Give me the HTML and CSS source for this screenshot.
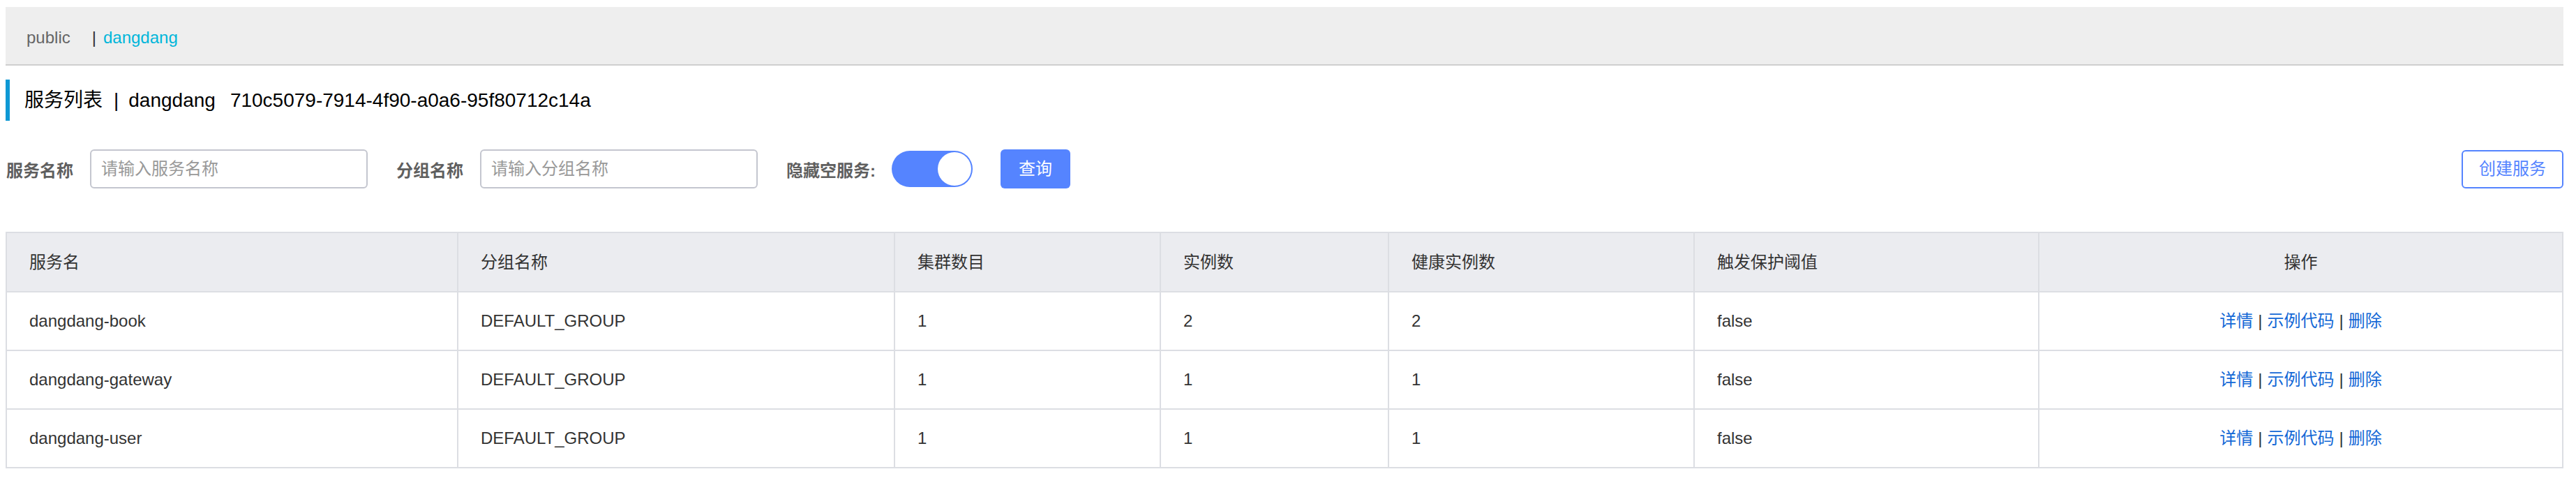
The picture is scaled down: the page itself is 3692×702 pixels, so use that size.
FILE: index.html
```html
<!DOCTYPE html>
<html lang="zh-CN">
<head>
<meta charset="utf-8">
<title>服务列表</title>
<link rel="stylesheet" href="styles.css">
</head>
<body>
<div class="page">
  <div class="ns-bar">
    <span class="ns-item">public</span>
    <span class="ns-sep">|</span>
    <span class="ns-item ns-active">dangdang</span>
  </div>

  <h1 class="page-title">服务列表<span class="title-sep">|</span>dangdang<span class="title-id">710c5079-7914-4f90-a0a6-95f80712c14a</span></h1>

  <div class="filter-row">
    <div class="filter-left">
      <div class="form-item">
        <label class="form-label">服务名称</label>
        <input class="text-input" type="text" placeholder="请输入服务名称">
      </div>
      <div class="form-item">
        <label class="form-label">分组名称</label>
        <input class="text-input" type="text" placeholder="请输入分组名称">
      </div>
      <div class="form-item">
        <label class="form-label">隐藏空服务:</label>
        <span class="switch"><span class="switch-knob"></span></span>
      </div>
      <button class="btn btn-primary" type="button">查询</button>
    </div>
    <button class="btn btn-outline" type="button">创建服务</button>
  </div>

  <table class="data-table">
    <colgroup>
      <col class="c1"><col class="c2"><col class="c3"><col class="c4"><col class="c5"><col class="c6"><col class="c7">
    </colgroup>
    <thead>
      <tr>
        <th>服务名</th>
        <th>分组名称</th>
        <th>集群数目</th>
        <th>实例数</th>
        <th>健康实例数</th>
        <th>触发保护阈值</th>
        <th class="center">操作</th>
      </tr>
    </thead>
    <tbody>
      <tr>
        <td>dangdang-book</td>
        <td>DEFAULT_GROUP</td>
        <td>1</td>
        <td>2</td>
        <td>2</td>
        <td>false</td>
        <td class="center"><a class="op-link">详情</a><span class="op-sep">|</span><a class="op-link">示例代码</a><span class="op-sep">|</span><a class="op-link">删除</a></td>
      </tr>
      <tr>
        <td>dangdang-gateway</td>
        <td>DEFAULT_GROUP</td>
        <td>1</td>
        <td>1</td>
        <td>1</td>
        <td>false</td>
        <td class="center"><a class="op-link">详情</a><span class="op-sep">|</span><a class="op-link">示例代码</a><span class="op-sep">|</span><a class="op-link">删除</a></td>
      </tr>
      <tr>
        <td>dangdang-user</td>
        <td>DEFAULT_GROUP</td>
        <td>1</td>
        <td>1</td>
        <td>1</td>
        <td>false</td>
        <td class="center"><a class="op-link">详情</a><span class="op-sep">|</span><a class="op-link">示例代码</a><span class="op-sep">|</span><a class="op-link">删除</a></td>
      </tr>
    </tbody>
  </table>
</div>
</body>
</html>
```

FILE: styles.css
```css
* { box-sizing: border-box; }

html, body {
  margin: 0;
  padding: 0;
  background: #ffffff;
}

body {
  font-family: "Liberation Sans", Arial, "Noto Sans CJK SC", sans-serif;
  font-size: 24px;
  color: #333333;
}

.page {
  padding: 10px 18px 0 8px;
}

/* namespace bar */
.ns-bar {
  height: 84px;
  background: #eeeeee;
  border-bottom: 2px solid #cfcfcf;
  padding: 5px 0 0 30px;
  line-height: 77px;
  font-size: 24px;
  display: flex;
}

.ns-item {
  color: #666666;
}

.ns-sep {
  color: #333333;
  margin: 0 10px 0 31px;
}

.ns-active {
  color: #00b6da;
}

/* page title */
.page-title {
  margin: 20px 0 0 0;
  height: 59px;
  border-left: 6px solid #0e98d4;
  padding-left: 21px;
  display: flex;
  align-items: center;
  font-size: 28px;
  font-weight: normal;
  color: #000000;
  line-height: 59px;
}

.title-sep {
  margin: 0 14px 0 16px;
}

.title-id {
  margin-left: 21px;
}

/* filter row */
.filter-row {
  margin-top: 41px;
  display: flex;
  justify-content: space-between;
  align-items: center;
}

.filter-left {
  display: flex;
  align-items: center;
}

.form-item {
  display: flex;
  align-items: center;
  margin-right: 40px;
}

.form-label {
  font-weight: bold;
  color: #5f5f5f;
  font-size: 24px;
  margin-left: 1px;
  margin-right: 24px;
}

.text-input {
  width: 398px;
  height: 56px;
  border: 2px solid #c4c6cf;
  border-radius: 6px;
  padding: 0 14px;
  font-family: "Liberation Sans", Arial, "Noto Sans CJK SC", sans-serif;
  font-size: 24px;
  color: #333333;
  outline: none;
  background: #ffffff;
}

.text-input::placeholder {
  color: #999999;
}

.switch {
  position: relative;
  display: inline-block;
  width: 116px;
  height: 52px;
  border-radius: 26px;
  background: #5584ff;
  margin-left: -1px;
}

.switch-knob {
  position: absolute;
  right: 2px;
  top: 2px;
  width: 48px;
  height: 48px;
  border-radius: 50%;
  background: #ffffff;
}

.btn {
  height: 56px;
  border-radius: 6px;
  font-family: "Liberation Sans", Arial, "Noto Sans CJK SC", sans-serif;
  font-size: 24px;
  cursor: pointer;
  line-height: 1;
}

.btn-primary {
  width: 100px;
  background: #5584ff;
  border: none;
  color: #ffffff;
}

.btn-outline {
  width: 146px;
  height: 55px;
  background: #ffffff;
  border: 2px solid #5584ff;
  color: #5584ff;
}

/* table */
.data-table {
  margin-top: 62px;
  width: 100%;
  border-collapse: collapse;
  table-layout: fixed;
  border: 2px solid #dcdee3;
}

.c1 { width: 647px; }
.c2 { width: 626px; }
.c3 { width: 381px; }
.c4 { width: 327px; }
.c5 { width: 438px; }
.c6 { width: 494px; }
.c7 { width: auto; }

.data-table th,
.data-table td {
  border: 2px solid #dcdee3;
  padding: 0 32px;
  text-align: left;
  font-weight: normal;
  font-size: 24px;
  color: #333333;
  line-height: 30px;
  white-space: nowrap;
}

.data-table thead tr {
  height: 85px;
  background: #ebecf0;
}

.data-table tbody tr {
  height: 84px;
}

.data-table .center {
  text-align: center;
}

.op-link {
  color: #1368d6;
  text-decoration: none;
  cursor: pointer;
}

.op-sep {
  color: #333333;
  margin: 0 7px;
}
```
